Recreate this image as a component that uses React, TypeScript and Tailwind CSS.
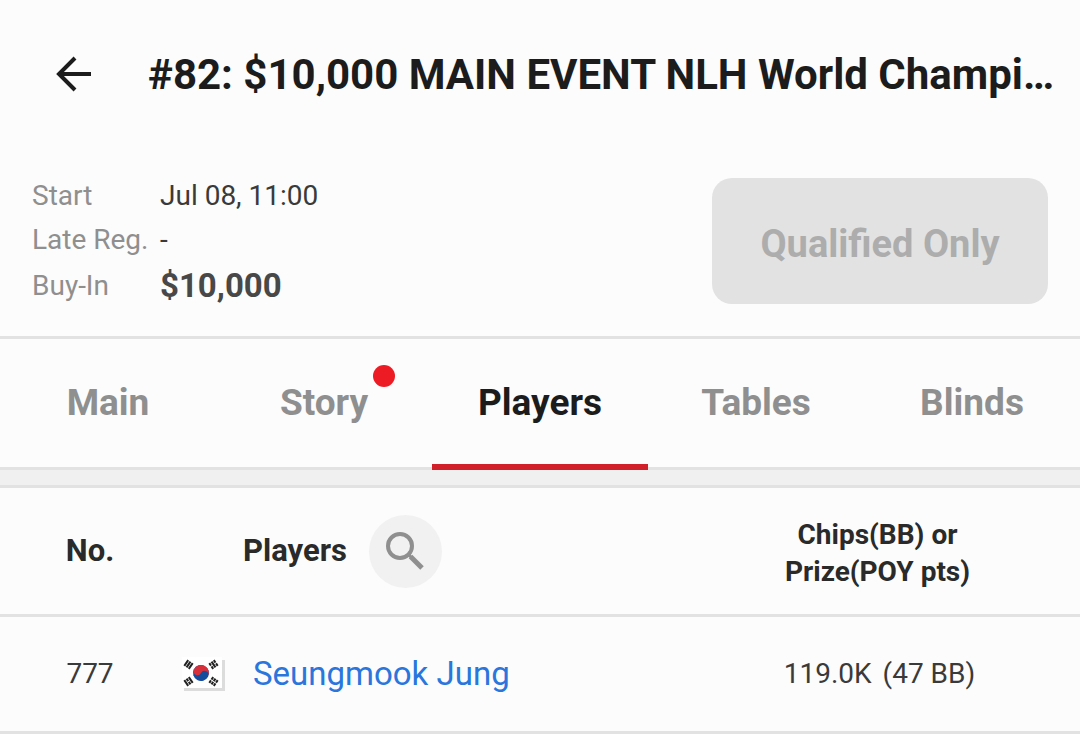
import clsx from 'clsx';

const tabs = [
  { label: 'Main' },
  { label: 'Story', unread: true },
  { label: 'Players' },
  { label: 'Tables' },
  { label: 'Blinds' },
];

const players = [
  { no: 777, name: 'Seungmook Jung', chips: '119.0K', blinds: '(47 BB)' },
];

function BackIcon() {
  return (
    <svg viewBox="0 0 36 36" className="size-9" fill="none" stroke="currentColor" strokeWidth="4" aria-hidden="true">
      <path d="M35 18H4M19 2 3 18l16 16" />
    </svg>
  );
}

function SearchIcon() {
  return (
    <svg viewBox="0 0 38 38" className="size-[38px]" fill="none" stroke="currentColor" strokeWidth="4" aria-hidden="true">
      <circle cx="14" cy="14" r="12" />
      <path d="m23 23 3 3" strokeWidth="3" />
      <path d="m24.500 24.500 11.500 11.500" strokeWidth="5" />
    </svg>
  );
}

function KoreaFlag() {
  return (
    <svg viewBox="0 0 43 34" className="h-[34px] w-[43px] shrink-0" role="img" aria-label="South Korea">
      <rect x="2" y="3" width="41" height="31" fill="#dcdcdc" />
      <rect width="40" height="31" fill="#fff" />
      <g transform="translate(19 16)">
        <g transform="rotate(28)">
          <circle r="8" fill="#164c9c" />
          <path d="M-8 0a8 8 0 0 1 16 0a4 4 0 0 0-8 0a4 4 0 0 1-8 0z" fill="#d8303a" />
        </g>
        {/* trigrams */}
        <g stroke="#222" strokeWidth="2" fill="none">
          <path transform="translate(-12.500 -8.500) rotate(-56)" d="M-3.500-2.700h7M-3.500 0h7M-3.500 2.700h7" />
          <path transform="translate(12.500 8.500) rotate(-56)" d="M-3.500-2.700h3m1 0h3M-3.500 0h3m1 0h3M-3.500 2.700h3m1 0h3" />
          <path transform="translate(12.500 -8.500) rotate(56)" d="M-3.500-2.700h3m1 0h3M-3.500 0h7M-3.500 2.700h3m1 0h3" />
          <path transform="translate(-12.500 8.500) rotate(56)" d="M-3.500-2.700h7M-3.500 0h3m1 0h3M-3.500 2.700h7" />
        </g>
      </g>
    </svg>
  );
}

export default function App() {
  return (
    <div className="min-h-screen bg-[#fcfcfc] font-['Roboto',sans-serif] text-[28px] text-[#3a3a3a]">
      <header className="flex h-[148px] items-center pr-3.5 pl-14">
        <button type="button" aria-label="Back" className="mr-14 text-[#1c1c1c]">
          <BackIcon />
        </button>
        <h1 className="min-w-0 flex-1 truncate text-[42px] font-bold text-[#1c1c1c]">
          #82: $10,000 MAIN EVENT NLH World Championship
        </h1>
      </header>

      <section className="flex items-start justify-between border-b-[3px] border-[#e2e2e2] px-8 pt-[26px] pb-[26px]">
        <dl className="grid grid-cols-[128px_auto] leading-11">
          <dt className="text-[#8f8f8f]">Start</dt>
          <dd>Jul 08, 11:00</dd>
          <dt className="whitespace-nowrap text-[#8f8f8f]">Late Reg.</dt>
          <dd>-</dd>
          <dt className="leading-12 text-[#8f8f8f]">Buy-In</dt>
          <dd className="text-[33px] leading-12 font-bold text-[#484848]">$10,000</dd>
        </dl>
        <button type="button" disabled className="mt-1 h-[126px] w-[336px] rounded-[20px] bg-[#e2e2e2] pt-1.5 text-[38px] font-bold text-[#adadad]">
          Qualified Only
        </button>
      </section>

      <nav className="grid grid-cols-5 border-b-[3px] border-[#e2e2e2]">
        {tabs.map((tab) => {
          const active = tab.label === 'Players';
          return (
            <button
              key={tab.label}
              type="button"
              aria-current={active ? 'page' : undefined}
              className={clsx('relative h-32 text-[37px] font-bold', active ? 'text-[#1c1c1c]' : 'text-[#8f8f8f]')}
            >
              <span className="relative">
                {tab.label}
                {tab.unread && <span className="absolute -top-4 -right-[27px] size-[22px] rounded-full bg-[#ed1c24]" />}
              </span>
              {active && <span className="absolute inset-x-0 -bottom-[3px] h-1.5 bg-[#d2202a]" />}
            </button>
          );
        })}
      </nav>

      <div className="h-[18px] border-b-[3px] border-[#e2e2e2] bg-[#f0f0f0]" />

      <table className="w-full table-fixed border-separate border-spacing-0">
        <thead>
          <tr className="h-[129px] text-[#2a2a2a]">
            <th className="w-1/6 border-b-[3px] border-[#e2e2e2] text-[31px] font-bold">No.</th>
            <th className="border-b-[3px] border-[#e2e2e2] pl-[63px] text-[31px] font-bold">
              <div className="flex items-center gap-[22px]">
                Players
                <button type="button" aria-label="Search players" className="flex size-[73px] items-center justify-center rounded-full bg-[#f1f1f1] text-[#8f8f8f]">
                  <SearchIcon />
                </button>
              </div>
            </th>
            <th className="w-3/8 border-b-[3px] border-[#e2e2e2] pt-1 leading-[37px] font-bold">
              Chips(BB) or
              <br />
              Prize(POY pts)
            </th>
          </tr>
        </thead>
        <tbody>
          {players.map((player) => (
            <tr key={player.no} className="h-[117px] text-center">
              <td className="border-b-[3px] border-[#e2e2e2]">{player.no}</td>
              <td className="border-b-[3px] border-[#e2e2e2] pl-0.5">
                <div className="flex items-center gap-7">
                  <KoreaFlag />
                  <a href="#player" className="text-[33px] text-[#2a76dd]">
                    {player.name}
                  </a>
                </div>
              </td>
              <td className="border-b-[3px] border-[#e2e2e2] pl-1">
                <span className="mr-1">{player.chips}</span> <span>{player.blinds}</span>
              </td>
            </tr>
          ))}
        </tbody>
      </table>
    </div>
  );
}
